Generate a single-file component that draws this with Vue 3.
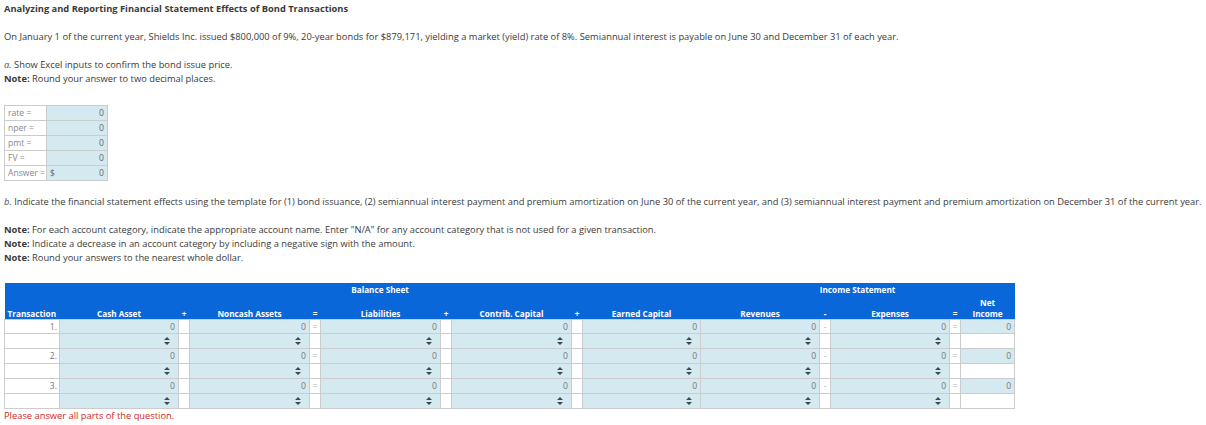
<script setup>
const inputs = [
  { label: 'rate =', cur: '' },
  { label: 'nper =', cur: '' },
  { label: 'pmt =', cur: '' },
  { label: 'FV =', cur: '' },
  { label: 'Answer =', cur: '$' }
]
const cols = [
  { name: 'Cash Asset', width: 119, head: '+', mark: '' },
  { name: 'Noncash Assets', width: 120, head: '=', mark: '=' },
  { name: 'Liabilities', width: 120, head: '+', mark: '' },
  { name: 'Contrib. Capital', width: 120, head: '+', mark: '' },
  { name: 'Earned Capital', width: 118, head: null, mark: null },
  { name: 'Revenues', width: 119, head: '-', mark: '-' },
  { name: 'Expenses', width: 119, head: '=', mark: '=' }
]
const txs = ['1.', '2.', '3.']
</script>

<template>
  <div class="page">
    <h1 class="title">Analyzing and Reporting Financial Statement Effects of Bond Transactions</h1>
    <p class="intro">On January 1 of the current year, Shields Inc. issued $800,000 of 9%, 20-year bonds for $879,171, yielding a market (yield) rate of 8%. Semiannual interest is payable on June 30 and December 31 of each year.</p>
    <div class="block-a">
      <p><i class="em">a.</i> Show Excel inputs to confirm the bond issue price.</p>
      <p><b>Note:</b> Round your answer to two decimal places.</p>
    </div>

    <table class="inputs">
      <tbody>
        <tr v-for="r in inputs" :key="r.label">
          <td class="lab">{{ r.label }}</td>
          <td class="val"><div class="val-in"><span class="cur">{{ r.cur }}</span><span>0</span></div></td>
        </tr>
      </tbody>
    </table>

    <p class="block-b"><i class="em">b.</i> Indicate the financial statement effects using the template for (1) bond issuance, (2) semiannual interest payment and premium amortization on June 30 of the current year, and (3) semiannual interest payment and premium amortization on December 31 of the current year.</p>
    <div class="notes">
      <p><b>Note:</b> For each account category, indicate the appropriate account name. Enter "N/A" for any account category that is not used for a given transaction.</p>
      <p><b>Note:</b> Indicate a decrease in an account category by including a negative sign with the amount.</p>
      <p><b>Note:</b> Round your answers to the nearest whole dollar.</p>
    </div>

    <table class="effects">
      <colgroup>
        <col :style="{ width: '55px' }" />
        <template v-for="c in cols" :key="c.name">
          <col :style="{ width: c.width + 'px' }" />
          <col v-if="c.head !== null" :style="{ width: '11px' }" />
        </template>
        <col :style="{ width: '54px' }" />
      </colgroup>
      <thead>
        <tr class="h1">
          <th></th>
          <th colspan="9">Balance Sheet</th>
          <th colspan="5">Income Statement</th>
        </tr>
        <tr class="h2">
          <th class="tx-head">Transaction</th>
          <template v-for="c in cols" :key="c.name">
            <th>{{ c.name }}</th>
            <th v-if="c.head !== null">{{ c.head }}</th>
          </template>
          <th class="net-head">Net<br />Income</th>
        </tr>
      </thead>
      <tbody>
        <template v-for="t in txs" :key="t">
          <tr>
            <td class="tx">{{ t }}</td>
            <template v-for="c in cols" :key="c.name">
              <td class="num">0</td>
              <td v-if="c.mark !== null" class="mark">{{ c.mark }}</td>
            </template>
            <td class="num">0</td>
          </tr>
          <tr>
            <td class="tx"></td>
            <template v-for="c in cols" :key="c.name">
              <td class="num spin-cell">
                <svg class="spin" width="6" height="8" viewBox="0 0 6 8"><path d="M3 0 6 3H0zM3 8 0 5H6z" /></svg>
              </td>
              <td v-if="c.mark !== null" class="mark"></td>
            </template>
            <td class="tx"></td>
          </tr>
        </template>
      </tbody>
    </table>
    <p class="error">Please answer all parts of the question.</p>
  </div>
</template>

<style>
html, body { margin: 0; background: #fff; }
</style>

<style scoped>
.page {
  width: 1206px;
  height: 425px;
  overflow: hidden;
  box-sizing: border-box;
  padding: 2px 0 0 4px;
  font-family: "Open Sans", sans-serif;
  font-size: 9.33px;
  line-height: 14px;
  color: #3a3a3a;
}
p, h1 { margin: 0; }
.title { font-size: 9.33px; font-weight: 700; }
.intro { margin-top: 14px; }
.block-a { margin-top: 14px; }
.em { color: #555; }
b { font-weight: 700; }

table { border-collapse: collapse; table-layout: fixed; }

.inputs { margin-top: 19px; width: 104px; }
.inputs td {
  height: 15px;
  padding: 1px 3px 0;
  box-sizing: border-box;
  border: 1px solid #ccc;
  font-size: 8.6px;
  line-height: 13px;
  color: #888;
}
.lab { width: 42px; white-space: nowrap; overflow: hidden; }
.val { background: #d5e9f0; }
.val-in { display: flex; justify-content: space-between; }
.cur, .val-in span:last-child { color: #666; }

.block-b { margin-top: 14px; white-space: nowrap; }
.notes { margin-top: 14px; }

.effects { margin-top: 18px; width: 1010px; }
.effects th {
  background: #0a67d9;
  color: #fff;
  font-size: 8.2px;
  line-height: 11px;
  font-weight: 700;
  padding: 0;
  text-align: center;
}
.h1 th { height: 14px; padding-bottom: 2px; box-sizing: border-box; }
.h2 th { height: 21px; box-sizing: border-box; vertical-align: bottom; }
.effects .tx-head { text-align: left; padding-left: 3px; }
.effects td {
  height: 15px;
  padding: 0 2px;
  box-sizing: border-box;
  border: 1px solid #ccc;
  font-size: 8.6px;
  line-height: 12px;
  color: #777;
  white-space: nowrap;
}
.effects tbody tr:first-child td { height: 14px; }
.effects .tx { text-align: right; background: #fff; }
.effects .num { text-align: right; background: #d5e9f0; padding-right: 3px; }
.effects .spin-cell { padding-right: 8px; }
.effects .mark { text-align: center; padding: 0; color: #b4b4b4; background: #fff; }
.spin { display: block; margin-left: auto; fill: #3c4a50; }
.error { color: #d0281f; line-height: 14px; }
</style>
